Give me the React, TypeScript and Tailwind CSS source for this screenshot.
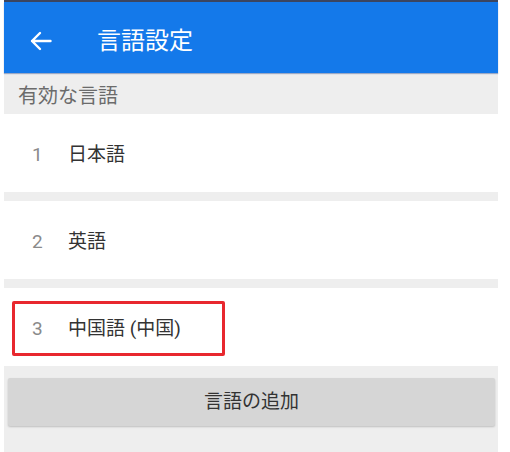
const languages = [
  { n: 1, name: "日本語" },
  { n: 2, name: "英語" },
  { n: 3, name: "中国語 (中国)", marked: true },
];

export default function App() {
  return (
    <div
      className="w-[510px] h-[452px] bg-white overflow-hidden"
      style={{ fontFamily: "Roboto, 'Noto Sans CJK JP', sans-serif" }}
    >
      <div className="ml-[4px] w-[494px] h-full flex flex-col bg-[#eeeeee]">
        <div className="h-[2px] bg-[#3b4560]" />
        <header className="h-[71px] bg-[#1479ea] flex items-center pt-[6px] shadow-[0_1px_1px_rgba(0,40,120,0.35)] relative z-10">
          <svg className="ml-[26px]" width="22" height="20" viewBox="0 0 22 20" fill="none" stroke="white" strokeWidth="2.4" strokeLinecap="round" strokeLinejoin="round">
            <path d="M20.5 10H2M10 2L2 10l8 8" />
          </svg>
          <h1 className="ml-[45px] text-[24px] text-white leading-none">言語設定</h1>
        </header>
        <div className="h-[41px] flex items-center pl-[14px] pt-[5px] text-[20px] text-[#6b6b6b]">
          有効な言語
        </div>
        <ul className="flex flex-col gap-[9px]">
          {languages.map((l) => (
            <li key={l.n} className="relative h-[78px] bg-white flex items-center pt-[4px]">
              <span className="w-[64px] pl-[28px] text-[19px] text-[#8a8a8a]">{l.n}</span>
              <span className="text-[19px] text-[#333333]">{l.name}</span>
              {l.marked && (
                <span className="absolute left-[8px] top-[13px] w-[213px] h-[55px] border-[3px] border-[#e8282e] rounded-[2px]" />
              )}
            </li>
          ))}
        </ul>
        <div className="flex-1 pt-[12px] px-[4px]">
          <button className="w-[487px] h-[48px] bg-[#d6d6d6] rounded-[2px] shadow-[0_1px_2px_rgba(0,0,0,0.2)] text-[19px] text-[#333333]">
            言語の追加
          </button>
        </div>
      </div>
    </div>
  );
}
